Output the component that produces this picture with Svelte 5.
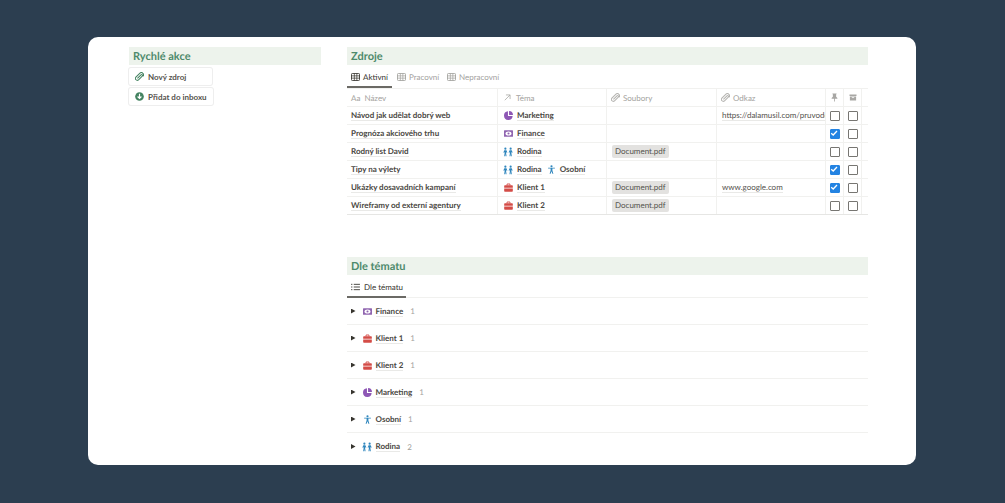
<script>
  const rows = [
    { name: 'Návod jak udělat dobrý web', tags: [['pie', 'Marketing']], file: '', link: 'https://dalamusil.com/pruvodce', pin: false },
    { name: 'Prognóza akciového trhu', tags: [['money', 'Finance']], file: '', link: '', pin: true },
    { name: 'Rodný list David', tags: [['family', 'Rodina']], file: 'Document.pdf', link: '', pin: false },
    { name: 'Tipy na výlety', tags: [['family', 'Rodina'], ['person', 'Osobní']], file: '', link: '', pin: true },
    { name: 'Ukázky dosavadních kampaní', tags: [['case', 'Klient 1']], file: 'Document.pdf', link: 'www.google.com', pin: true },
    { name: 'Wireframy od externí agentury', tags: [['case', 'Klient 2']], file: 'Document.pdf', link: '', pin: false }
  ];
  const groups = [
    ['money', 'Finance', 1], ['case', 'Klient 1', 1], ['case', 'Klient 2', 1],
    ['pie', 'Marketing', 1], ['person', 'Osobní', 1], ['family', 'Rodina', 2]
  ];
</script>

{#snippet tableIcon()}
  <svg class="ti" viewBox="0 0 10 9"><rect x=".5" y=".5" width="9" height="8" rx="1" fill="none" stroke="currentColor"/><path d="M.5 3.2h9M.5 5.8h9M3.7 .5v8M6.5 .5v8" stroke="currentColor" stroke-width=".8" fill="none"/></svg>
{/snippet}

{#snippet clip(color)}
  <svg class="ci" viewBox="0 0 12 12"><path d="M3.2 8.800 8 4a1.200 1.200 0 0 1 1.700 1.700L4.400 11A2.600 2.600 0 0 1 .9 7.400L6.600 1.600a3 3 0 0 1 4.200 4.200" transform="translate(0 -.2)" fill="none" stroke={color} stroke-width="1.400"/></svg>
{/snippet}

{#snippet icon(kind)}
  {#if kind === 'pie'}
    <svg class="ic" viewBox="0 0 10 10"><path d="M4.400 .4v5.200h5.200A4.800 4.800 0 1 1 4.400 .4z" fill="#8e57b5"/><path d="M5.600 0a4.600 4.600 0 0 1 4.400 4.400H5.600z" fill="#8e57b5"/></svg>
  {:else if kind === 'money'}
    <svg class="ic" viewBox="0 0 10 10"><rect x="0" y="1.300" width="10" height="7.400" rx=".6" fill="#9065b0"/><ellipse cx="5" cy="5" rx="3.300" ry="2.300" fill="#fff"/><circle cx="5" cy="5" r="1.200" fill="#9065b0"/></svg>
  {:else if kind === 'case'}
    <svg class="ic" viewBox="0 0 10 10"><path d="M3.400 2.800V1.100h3.200v1.700" fill="none" stroke="#d44c47" stroke-width="1"/><path d="M.2 3.400q0-.8.8-.8h8q.8 0 .8.8v1.800H.2zM.2 6h9.600v2.800q0 .8-.8.8H1q-.8 0-.8-.8z" fill="#d44c47"/></svg>
  {:else if kind === 'person'}
    <svg class="ic" viewBox="0 0 10 10"><circle cx="5" cy="1.400" r="1.200" fill="#2f86bd"/><path d="M1.200 3h7.600v.9H6v2.200l1.100 3.700H6L5 6.900 4 9.800H2.900L4 6.100V3.900H1.200z" fill="#2f86bd"/></svg>
  {:else}
    <svg class="ic fam" viewBox="0 0 11 10"><g fill="#2f86bd"><circle cx="2.600" cy="1.300" r="1.200"/><circle cx="8.400" cy="1.300" r="1.200"/><path d="M.4 5.600 1.400 3h2.400l1 2.600-.8.300-.6-1.200v1.500l.5 3.600H2.900L2.600 7l-.3 2.800H1.300l.5-3.600V4.700l-.6 1.200z"/><path d="M6.200 5.600 7.200 3h2.400l1 2.600-.8.300-.6-1.200v1.500l.5 3.600H8.700L8.400 7l-.3 2.800H7.100l.5-3.600V4.700L7 5.900z"/></g></svg>
  {/if}
{/snippet}

{#snippet box(on)}
  {#if on}
    <span class="box on"><svg viewBox="0 0 10 10"><path d="M2.200 5.200 4.200 7 8 3" fill="none" stroke="#fff" stroke-width="1.300"/></svg></span>
  {:else}
    <span class="box"></span>
  {/if}
{/snippet}

<div class="card">
  <aside class="left">
    <h2>Rychlé akce</h2>
    <button class="action first">{@render clip('#448361')}<span>Nový zdroj</span></button>
    <button class="action">
      <svg class="ic" viewBox="0 0 10 10"><circle cx="5" cy="5" r="4.800" fill="#448361"/><path d="M5 2v5M2.900 5 5 7.200 7.100 5" fill="none" stroke="#fff" stroke-width="1.300"/></svg>
      <span>Přidat do inboxu</span>
    </button>
  </aside>

  <main class="right">
    <h2>Zdroje</h2>
    <div class="tabs">
      <div class="tab active w1">{@render tableIcon()}Aktivní</div>
      <div class="tab w3">{@render tableIcon()}Pracovní</div>
      <div class="tab">{@render tableIcon()}Nepracovní</div>
    </div>
    <div class="table">
      <div class="row head">
        <div class="cell"><span class="aa">Aa</span>Název</div>
        <div class="cell"><svg class="ar" viewBox="0 0 9 9"><path d="M1 8 7.800 1.200M2.500 1.200h5.300v5.300" fill="none" stroke="#a8a7a4"/></svg>Téma</div>
        <div class="cell">{@render clip('#b5b4b1')}Soubory</div>
        <div class="cell">{@render clip('#b5b4b1')}Odkaz</div>
        <div class="cell mid">
          <svg class="hi" viewBox="0 0 8 11"><path d="M1.500 .5h5v1H6v3l1.500 1.500v1h-3v3.500h-1V7H.5V6L2 4.500v-3h-.5z" fill="#a8a7a4"/></svg>
        </div>
        <div class="cell mid">
          <svg class="hi w" viewBox="0 0 10 9"><path d="M.5 .5h9V2.500H.5zM1 3.200h8V8.500H1z" fill="#a8a7a4"/><path d="M3.500 4.600h3" stroke="#fff"/></svg>
        </div>
        <div class="tail"></div>
      </div>
      {#each rows as r}
        <div class="row">
          <div class="cell title"><span>{r.name}</span></div>
          <div class="cell tags">
            {#each r.tags as t}
              <span class="tag">{@render icon(t[0])}<span>{t[1]}</span></span>
            {/each}
          </div>
          <div class="cell">{#if r.file}<span class="file">{r.file}</span>{/if}</div>
          <div class="cell link"><span>{r.link}</span></div>
          <div class="cell mid">{@render box(r.pin)}</div>
          <div class="cell mid">{@render box(false)}</div>
          <div class="tail"></div>
        </div>
      {/each}
    </div>

    <h2 class="second">Dle tématu</h2>
    <div class="tabs list">
      <div class="tab active w2">
        <svg class="ti" viewBox="0 0 10 9"><path d="M0 1.500h1.500M3 1.500h7M0 4.500h1.500M3 4.500h7M0 7.500h1.500M3 7.500h7" stroke="currentColor" fill="none"/></svg>
        <span>Dle tématu</span>
      </div>
    </div>
    <div class="groups">
      {#each groups as g}
        <div class="group">
          <span class="tri"></span>
          {@render icon(g[0])}
          <span class="gname">{g[1]}</span>
          <span class="count">{g[2]}</span>
        </div>
      {/each}
    </div>
  </main>
</div>

<style>
  :global(body) {
    margin: 0;
    background: #2c3e50;
    font-family: Lato, "Noto Sans", sans-serif;
    text-rendering: geometricPrecision;
  }
  .card {
    box-sizing: border-box;
    width: 828px;
    height: 428px;
    margin: 37px 0 0 88px;
    padding: 10px 48px 0 41px;
    background: #fff;
    border-radius: 10px;
    display: grid;
    grid-template-columns: 192px 521px;
    column-gap: 26px;
    color: #37352f;
    overflow: hidden;
  }
  h2 {
    margin: 0;
    height: 18px;
    line-height: 20px;
    padding-left: 4px;
    background: #edf3ec;
    color: #4d8a6b;
    font-size: 11px;
    font-weight: 700;
  }
  .action {
    display: flex;
    align-items: center;
    gap: 4px;
    width: 84px;
    height: 17px;
    box-sizing: border-box;
    margin-top: 3px;
    padding: 0 6px;
    border: 0;
    border-radius: 2px;
    background: #fff;
    box-shadow: 0 0 0 1px rgba(15, 15, 15, .07);
    color: #55534e;
    white-space: nowrap;
    font: 700 8px Lato, sans-serif;
  }
  .action.first { width: 83px; }
  .tabs {
    display: flex;
    height: 23px;
    padding-top: 2px;
    box-sizing: border-box;
  }
  .tab {
    display: flex;
    align-items: center;
    gap: 3px;
    padding: 0 5px 0 4px;
    color: #a3a29e;
    font-size: 8px;
    white-space: nowrap;
    box-sizing: border-box;
    height: 19px;
  }
  .tab.active {
    color: #37352f;
    box-shadow: 0 2px 0 #6b6a65;
  }
  .tab.w1 { width: 45px; margin-right: 1px; }
  .tab.w3 { width: 50px; }
  .tab.w2 { width: 59px; gap: 4px; }
  .ti { width: 9px; height: 8px; flex: none; }
  .table { border-top: 1px solid #f1f1ef; border-bottom: 1px solid #e6e6e4; }
  .row {
    display: grid;
    grid-template-columns: 151px 109px 110px 109px 18px 18px 6px;
    height: 18px;
    box-sizing: border-box;
    border-bottom: 1px solid #f1f1ef;
    font-size: 8px;
  }
  .row:last-child { border-bottom: 0; height: 17px; }
  .cell {
    display: flex;
    align-items: center;
    gap: 3px;
    padding: 0 4px;
    border-right: 1px solid #f1f1ef;
    min-width: 0;
    overflow: hidden;
    white-space: nowrap;
    box-sizing: border-box;
    color: #4a4843;
  }
  .head .cell { color: #a3a29e; }
  .aa { margin-right: 1px; }
  .ar { width: 7px; height: 7px; margin: 0 2px 0 2px; }
  .ci { width: 9px; height: 9px; flex: none; }
  .mid { justify-content: center; padding: 0; }
  .hi { width: 7px; height: 9px; }
  .hi.w { width: 8px; height: 7px; }
  .title { font-weight: 700; }
  .title span, .tag > span, .link span, .gname {
    border-bottom: 1px solid #e9e9e7;
    line-height: 10px;
  }
  .tags { gap: 5px; padding-left: 6px; font-weight: 700; }
  .tag { display: flex; align-items: center; gap: 4px; }
  .ic { width: 9px; height: 9px; flex: none; }
  .ic.fam { width: 10px; height: 10px; margin-left: -1px; }
  .file {
    margin-left: 1px;
    padding: 0 3px;
    height: 13px;
    line-height: 13px;
    border-radius: 2px;
    background: #e3e2e0;
    color: #55534e;
  }
  .link { color: #55534e; padding-left: 5px; }
  .box {
    box-sizing: border-box;
    width: 10px;
    height: 10px;
    border: 1.500px solid #777672;
    border-radius: 1px;
    display: block;
  }
  .box.on {
    background: #2383e2;
    border-color: #2383e2;
  }
  .box svg { display: block; width: 10px; height: 10px; margin: -1.500px; }
  .second { margin-top: 42px; }
  .list { height: 22px; }
  .groups { border-top: 1px solid #f1f1ef; }
  .group {
    display: flex;
    align-items: center;
    height: 27px;
    box-sizing: border-box;
    border-bottom: 1px solid #f1f1ef;
    padding-left: 4px;
    font-size: 8px;
    font-weight: 700;
    color: #4a4843;
  }
  .group:last-child { border-bottom: 0; }
  .tri {
    width: 4.500px;
    height: 5px;
    background: #37352f;
    clip-path: polygon(0 0, 100% 50%, 0 100%);
    margin-right: 7px;
  }
  .gname { margin-left: 4px; }
  .count { margin-left: 7px; color: #a3a29e; font-weight: 400; }
</style>
